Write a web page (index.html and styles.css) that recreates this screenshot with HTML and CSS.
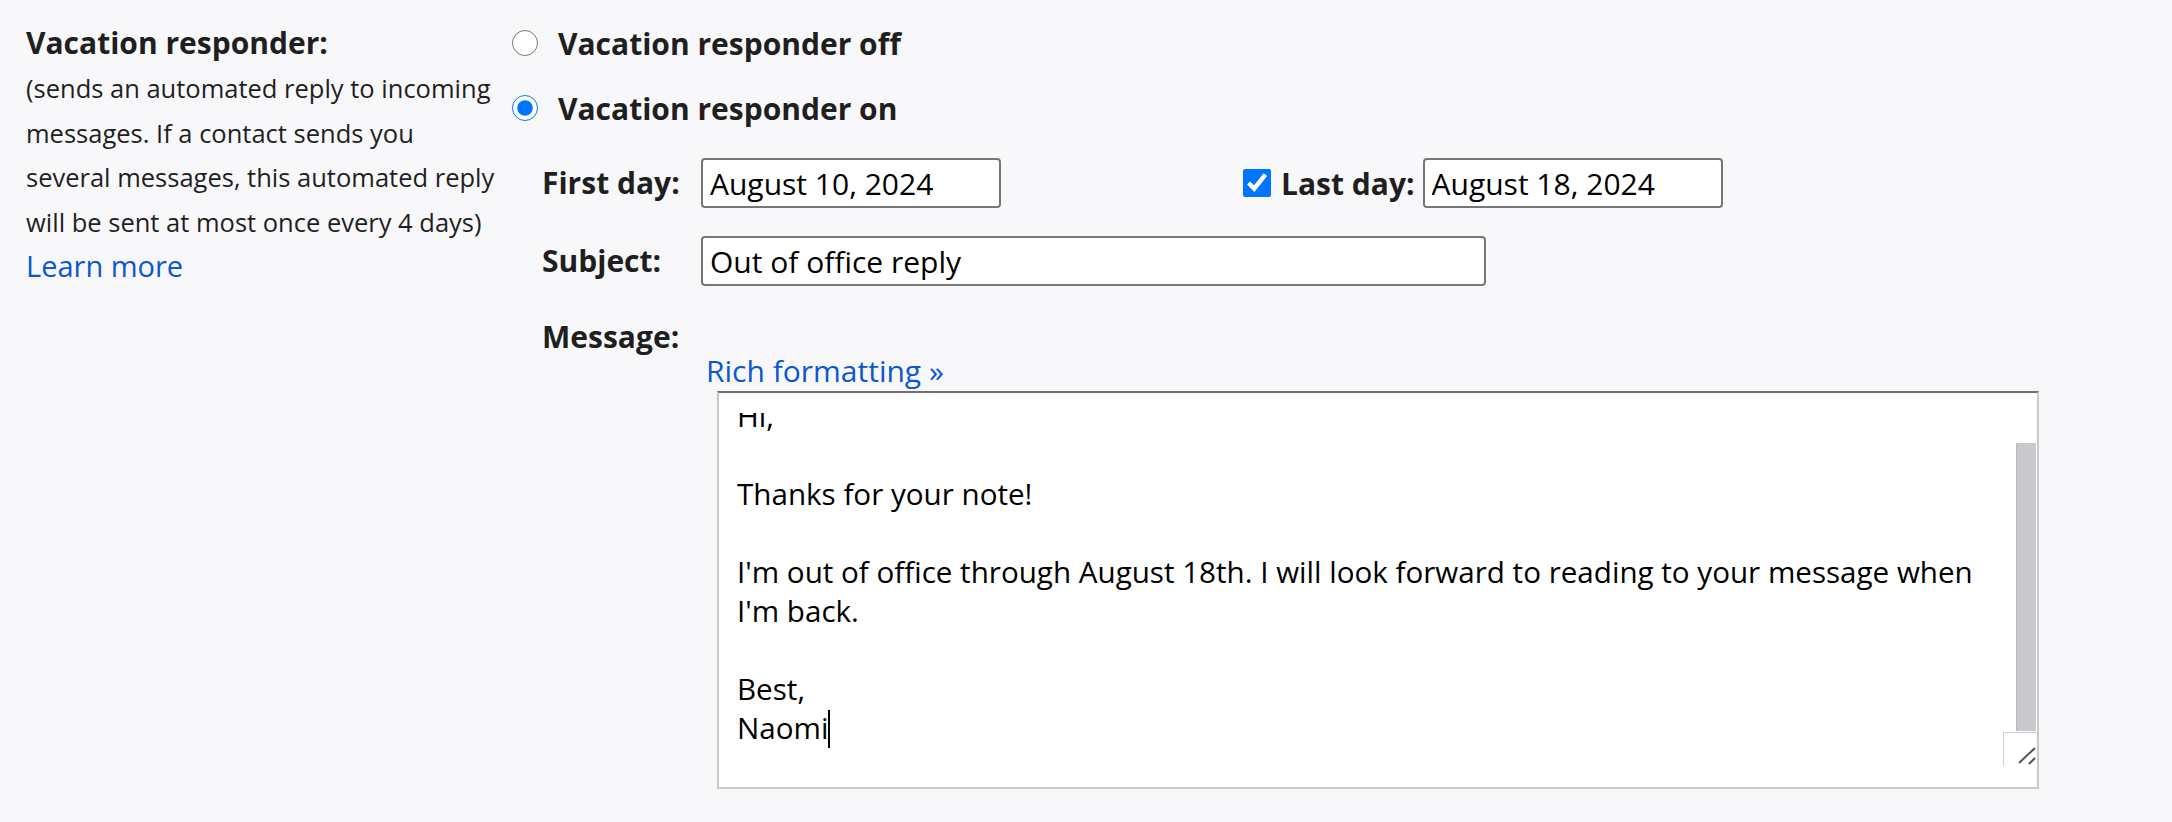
FILE: index.html
```html
<!DOCTYPE html>
<html lang="en">
<head>
<meta charset="utf-8">
<title>Vacation responder</title>
<link rel="stylesheet" href="styles.css">
</head>
<body>
<div class="setting">
  <div class="label-col">
    <div class="title">Vacation responder:</div>
    <div class="desc">(sends an automated reply to incoming<br>messages. If a contact sends you<br>several messages, this automated reply<br>will be sent at most once every 4 days)</div>
    <a class="link learn" href="#">Learn more</a>
  </div>
  <div class="value-col">
    <label class="radio-row"><input type="radio" name="vr" class="radio"><span>Vacation responder off</span></label>
    <label class="radio-row"><input type="radio" name="vr" class="radio" checked><span>Vacation responder on</span></label>
    <div class="fields">
      <div class="field-row">
        <span class="flabel">First day:</span>
        <input class="tinput date" type="text" value="August 10, 2024">
        <span class="lastday">
          <input type="checkbox" class="check" checked>
          <span class="flabel-inline">Last day:</span>
          <input class="tinput date" type="text" value="August 18, 2024">
        </span>
      </div>
      <div class="field-row subject-row">
        <span class="flabel">Subject:</span>
        <input class="tinput subject" type="text" value="Out of office reply">
      </div>
      <div class="field-row msg-row">
        <span class="flabel">Message:</span>
        <div class="msg-body">
          <a class="link rich" href="#">Rich formatting »</a>
          <div class="ta">
            <div class="ta-view">
<div class="ta-text">Hi,

Thanks for your note!

I'm out of office through August 18th. I will look forward to reading to your message when
I'm back.

Best,
Naomi<span class="caret"></span></div>
            </div>
            <div class="ta-scroll"><div class="thumb"></div></div>
            <div class="resizer">
              <svg width="34" height="34" viewBox="0 0 34 34"><path d="M16 31 L32 16 M26 32 L32 26" stroke="#555" stroke-width="2" fill="none"/></svg>
            </div>
          </div>
        </div>
      </div>
    </div>
  </div>
</div>
</body>
</html>
```

FILE: styles.css
```css
body {
  margin: 0;
  background: #f8f8fb;
  font-family: "Open Sans", Roboto, "Liberation Sans", sans-serif;
  color: #1f1f1f;
}

.setting {
  display: flex;
  padding-top: 23px;
}

.label-col {
  width: 512px;
  padding-left: 26px;
  box-sizing: border-box;
  flex: none;
}

.title {
  font-size: 30px;
  font-weight: 700;
  line-height: 40px;
}

.desc {
  font-size: 25.5px;
  line-height: 44.5px;
  margin-top: 3px;
  white-space: nowrap;
}

.link {
  color: #0b57d0;
  text-decoration: none;
}

.learn {
  display: block;
  font-size: 29px;
  line-height: 40px;
  margin-top: 1.5px;
}

.value-col {
  flex: 1;
}

.radio-row {
  display: flex;
  align-items: center;
  gap: 20px;
  height: 40px;
  font-size: 30px;
  font-weight: 700;
}

.radio-row + .radio-row {
  margin-top: 25px;
}

.radio {
  width: 26px;
  height: 26px;
  margin: 0;
}

.fields {
  padding-left: 30px;
  margin-top: 30px;
}

.field-row {
  display: flex;
  align-items: center;
}

.flabel {
  flex: none;
  width: 159px;
  font-size: 30px;
  font-weight: 700;
  line-height: 50px;
}

.tinput {
  height: 50px;
  box-sizing: border-box;
  border: 2px solid #767676;
  border-radius: 4px;
  padding: 0 7px;
  font-family: "Open Sans", Roboto, "Liberation Sans", sans-serif;
  font-size: 30px;
  color: #000;
  background: #fff;
  margin: 0;
  outline: none;
}

.date {
  width: 300px;
}

.lastday {
  display: flex;
  align-items: center;
  margin-left: 242px;
}

.check {
  width: 28px;
  height: 28px;
  margin: 0;
}

.flabel-inline {
  font-size: 30px;
  font-weight: 700;
  margin: 0 8px 0 10px;
}

.subject-row {
  margin-top: 28px;
}

.subject {
  width: 785px;
}

.msg-row {
  margin-top: 26px;
  align-items: flex-start;
}

.msg-body {
  padding-top: 39px;
}

.rich {
  display: block;
  font-size: 30px;
  line-height: 40px;
  margin-left: 5px;
}

.ta {
  position: relative;
  display: flex;
  margin-left: 16px;
  width: 1322px;
  height: 398px;
  box-sizing: border-box;
  border: 2px solid #c8c8c8;
  border-top-color: #6f6f6f;
  background: #fff;
}

.ta-view {
  flex: 1;
  margin-top: 20px;
  height: 353px;
  overflow: hidden;
}

.ta-text {
  margin-top: -17px;
  padding-left: 18px;
  font-size: 29.6px;
  line-height: 39px;
  white-space: pre;
  color: #000;
}

.caret {
  display: inline-block;
  width: 2px;
  height: 38px;
  background: #000;
  vertical-align: -9px;
}

.ta-scroll {
  flex: none;
  width: 20px;
  margin-right: 1px;
  padding-top: 50px;
}

.thumb {
  height: 288px;
  background: #c9c8cc;
  border-left: 1px solid #b9b8bd;
  box-sizing: border-box;
}

.resizer {
  position: absolute;
  right: 0;
  top: 339px;
  width: 34px;
  height: 34px;
  box-sizing: border-box;
  border-left: 1px solid #cfcfcf;
  border-top: 1px solid #cfcfcf;
  background: #fff;
}

.resizer svg {
  display: block;
  margin: -1px 0 0 -1px;
}
```
